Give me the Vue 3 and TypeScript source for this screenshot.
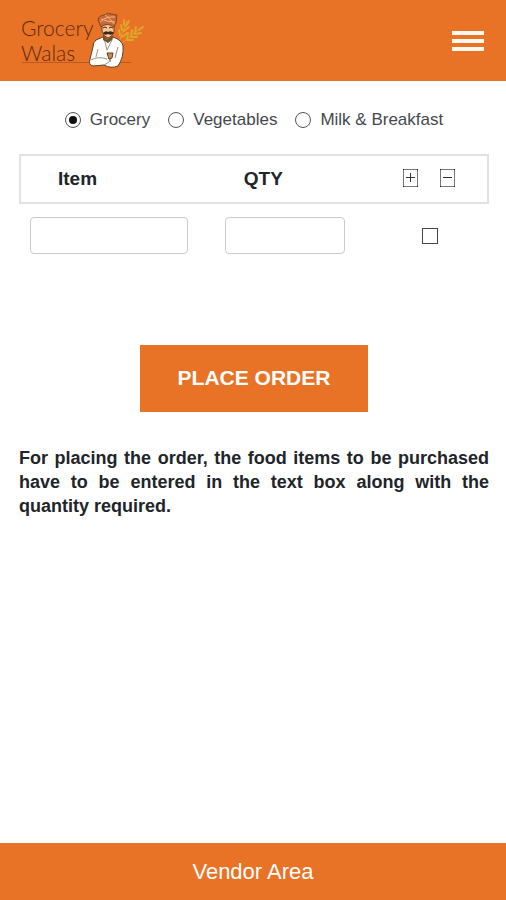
<script setup lang="ts">
import { ref } from 'vue'

interface OrderRow {
  id: number
  item: string
  quantity: string
  selected: boolean
}

const categories = ['Grocery', 'Vegetables', 'Milk & Breakfast']
const category = ref('Grocery')
const rows = ref<OrderRow[]>([{ id: 1, item: '', quantity: '', selected: false }])
let nextId = 2

function addRow() {
  rows.value.push({ id: nextId++, item: '', quantity: '', selected: false })
}

function removeRows() {
  rows.value = rows.value.filter((row) => !row.selected)
}
</script>

<template>
  <div class="page">
    <header class="header">
      <a class="logo" href="#">
        <svg width="130" height="64" viewBox="0 0 130 64">
          <text class="logo-text" x="1" y="27">Grocery</text>
          <text class="logo-text" x="1" y="52">Walas</text>
          <path d="M2 53.500H111" stroke="#b85a20" stroke-width="1" />
          <!-- wheat -->
          <g fill="none" stroke="#e0a52a" stroke-linecap="round">
            <path d="M99 33L107 12M102 34L122 18" stroke-width="1" />
            <path d="M100 26l-1-5M102 21l-1-5M104 16l0-5M102 28l5-4M104 22l5-4M106 17l3-5" stroke-width="2" />
            <path d="M107 30l1-6M111 27l1-6M115 24l1-6M107 31l6 0M111 28l6 0M115 25l6-1M119 21l4-3" stroke-width="2" />
          </g>
          <g transform="translate(7 0)">
            <!-- shirt and folded arms -->
            <path d="M76 28L69 31Q66 33 66 38L63 50Q61 56 66 57L77 56Q84 60 91 57Q97 48 96 37Q95 31 86 28L82 31Z" fill="#fffdf9" stroke="#54412f" stroke-width="1" />
            <path d="M71 40L69 48M64 51Q71 47 80 50M77 56L82 53M77 29L80 41L86 29M91 38L88 49" fill="none" stroke="#99928a" stroke-width="1" />
            <path d="M76 25L80 31L86 26L85 31L81 34L76 31Z" fill="#745030" />
            <path d="M80 44H86L85 49L82 50Z" fill="#cf8954" stroke="#57402d" />
            <path d="M83 50V53" stroke="#57402d" />
            <!-- face -->
            <path d="M75 15L87 15L87 23Q84 29 81 29Q77 28 75 22Z" fill="#f5c69a" stroke="#6d3c21" />
            <path d="M76 19Q78 17 80 19M82 19Q84 17 86 19" fill="none" stroke="#40251b" />
            <path d="M76 24Q79 21 81 23Q84 21 87 24Q84 27 81 25Q78 27 76 24Z" fill="#40251b" />
            <!-- turban -->
            <path d="M74 18L71 11Q72 6 78 6Q80 3 84 5L90 6Q90 14 87 18Q80 13 74 18Z" fill="#c96a36" stroke="#85451f" />
            <path d="M73 13Q79 7 88 8M74 10Q81 13 88 13M78 6Q82 8 87 15" fill="none" stroke="#f2b684" />
          </g>
        </svg>
      </a>
      <button class="menu" type="button" aria-label="Menu">
        <span class="bar"></span>
        <span class="bar"></span>
        <span class="bar"></span>
      </button>
    </header>

    <main class="content">
      <div class="categories" role="radiogroup" aria-label="Category">
        <label v-for="name in categories" :key="name" class="category">
          <input v-model="category" class="radio" type="radio" name="category" :value="name" />
          {{ name }}
        </label>
      </div>

      <table class="order">
        <thead>
          <tr>
            <th class="col-item" scope="col">Item</th>
            <th class="col-qty" scope="col">QTY</th>
            <th class="col-actions">
              <div class="actions">
                <button class="icon" type="button" aria-label="Add row" @click="addRow">
                  <svg width="15" height="18" viewBox="0 0 15 18" fill="none">
                    <path d="M.5 .5H14.5V17.5H.5Z" stroke="#777" />
                    <path d="M3 8.500H12M7.500 4V13" stroke="#333" />
                    <path d="M0 0h1v1H0zM14 0h1v1h-1zM0 17h1v1H0zM14 17h1v1h-1z" fill="#222" />
                  </svg>
                </button>
                <button class="icon" type="button" aria-label="Remove selected rows" @click="removeRows">
                  <svg width="15" height="18" viewBox="0 0 15 18" fill="none">
                    <path d="M.5 .5H14.5V17.5H.5Z" stroke="#777" />
                    <path d="M3 8.500H12" stroke="#333" />
                    <path d="M0 0h1v1H0zM14 0h1v1h-1zM0 17h1v1H0zM14 17h1v1h-1z" fill="#222" />
                  </svg>
                </button>
              </div>
            </th>
          </tr>
        </thead>
        <tbody>
          <tr v-for="row in rows" :key="row.id">
            <td class="cell-item"><input v-model="row.item" class="field" type="text" aria-label="Item" /></td>
            <td class="cell-qty"><input v-model="row.quantity" class="field" type="text" aria-label="Quantity" /></td>
            <td class="cell-check"><input v-model="row.selected" class="check" type="checkbox" aria-label="Select row" /></td>
          </tr>
        </tbody>
      </table>

      <button class="place" type="button">PLACE ORDER</button>

      <p class="note">
        For placing the order, the food items to be purchased have to be entered in the text box
        along with the quantity required.
      </p>
    </main>

    <footer class="footer"><a class="vendor" href="#">Vendor Area</a></footer>
  </div>
</template>

<style>
body {
  margin: 0;
  background: #fff;
}
</style>

<style scoped>
.page {
  display: flex;
  flex-direction: column;
  min-height: 100vh;
  font-family: "Liberation Sans", Arial, sans-serif;
  color: #212529;
}

.header {
  display: flex;
  align-items: center;
  justify-content: space-between;
  box-sizing: border-box;
  height: 81px;
  padding: 0 22px 0 20px;
  background: #e87326;
}

.logo {
  display: block;
  height: 64px;
}

.logo-text {
  font-family: Lato, sans-serif;
  font-size: 21px;
  font-weight: 300;
  fill: #5b2b12;
}

.menu {
  display: flex;
  flex-direction: column;
  gap: 4px;
  padding: 0;
  border: 0;
  background: none;
}

.bar {
  width: 32px;
  height: 4px;
  background: #fff8f1;
}

.content {
  display: flex;
  flex: 1;
  flex-direction: column;
  align-items: center;
  padding: 29px 17px 24px 19px;
}

.categories {
  display: flex;
  justify-content: center;
  gap: 18px;
  margin-bottom: 24px;
}

.category {
  display: flex;
  align-items: center;
  gap: 9px;
  font-size: 17px;
  line-height: 20px;
  color: #45484d;
  white-space: nowrap;
}

.radio {
  display: grid;
  place-items: center;
  width: 16px;
  height: 16px;
  margin: 0;
  appearance: none;
  border: 1px solid #555;
  border-radius: 50%;
  background: #fff;
}

.radio:checked::before {
  width: 8px;
  height: 8px;
  border-radius: 50%;
  background: #111;
  content: "";
}

.order {
  width: 100%;
  table-layout: fixed;
  border-spacing: 0;
}

.order th {
  height: 46px;
  border: solid #e2e2e2;
  border-width: 2px 0;
  font-size: 19px;
  text-align: left;
}

.order .col-item {
  width: 40%;
  padding: 0 0 0 37px;
  border-left-width: 2px;
}

.order .col-qty {
  width: 30%;
  padding: 0 0 0 38px;
}

.order .col-actions {
  width: 30%;
  padding: 0 0 0 22px;
  border-right-width: 2px;
}

.actions {
  display: flex;
  justify-content: center;
  gap: 22px;
  padding: 0 4px 3px 0;
}

.icon {
  display: block;
  height: 18px;
  padding: 0;
  border: 0;
  background: none;
}

.icon svg {
  display: block;
}

.cell-item {
  padding: 13px 18px 0 11px;
}

.cell-qty {
  padding: 13px 8px 0 19px;
}

.cell-check {
  padding: 13px 0 0 18px;
}

.field {
  display: block;
  box-sizing: border-box;
  width: 100%;
  height: 37px;
  padding: 0 8px;
  border: 1px solid #c9cccf;
  border-radius: 4px;
  background: #fff;
  font: inherit;
}

.check {
  display: block;
  width: 16px;
  height: 16px;
  margin: 0 auto;
  appearance: none;
  border: 1px solid #444;
  background: #fff;
}

.check:checked {
  background: #444;
}

.place {
  height: 67px;
  margin-top: 91px;
  padding: 0 38px 2px;
  border: 0;
  background: #e87326;
  color: #fff;
  font-family: inherit;
  font-size: 21px;
  font-weight: 700;
}

.note {
  margin: 34px 0 0;
  font-size: 18px;
  font-weight: 700;
  line-height: 24px;
  text-align: justify;
}

.footer {
  display: flex;
  align-items: center;
  justify-content: center;
  height: 57px;
  background: #e87326;
}

.vendor {
  color: #fff;
  font-size: 22px;
  text-decoration: none;
}
</style>
